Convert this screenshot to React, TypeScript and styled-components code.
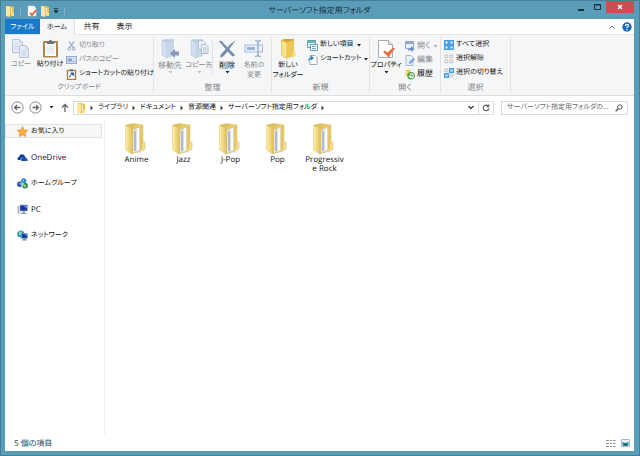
import React from "react";
import styled, { createGlobalStyle } from "styled-components";

const Global = createGlobalStyle`
  * { box-sizing: border-box; }
  body { margin: 0; }
  body, button, input {
    font-family: "Open Sans", "Noto Sans CJK JP", sans-serif;
    font-size: 8px;
    line-height: 12px;
    font-feature-settings: "palt", "kern";
    text-rendering: geometricPrecision;
    color: #111;
  }
  button { border: 0; padding: 0; background: none; white-space: nowrap; }
  svg { display: block; flex: none; }
`;

const Window = styled.div`
  min-height: 100vh;
  display: flex;
  flex-direction: column;
  background: #5b9db9;
  border: 1px solid #437f99;
  padding: 0 5px 4px 4px;
`;
const TitleBar = styled.header`
  height: 18px;
  display: grid;
  grid-template-columns: 1fr auto 1fr;
  align-items: center;
`;
const QuickAccess = styled.div`
  display: flex;
  align-items: center;
  height: 18px;
  gap: 3px;
  > i { width: 1px; height: 7px; background: #84b6cb; margin: 0 3px 0 2px; }
`;
const Title = styled.h1`
  margin: 0;
  font-size: 8px;
  line-height: 20px;
  font-weight: 400;
  color: #12303c;
`;
const Controls = styled.div`
  display: flex;
  align-self: start;
  justify-content: flex-end;
`;
const Control = styled.button<{ $close?: boolean }>`
  width: ${(p) => (p.$close ? 28 : 17)}px;
  height: 12px;
  display: grid;
  place-items: center;
  background: ${(p) => (p.$close ? "#c75050" : "transparent")};
`;
const Client = styled.main`
  flex: 1;
  display: flex;
  flex-direction: column;
  background: #fff;
`;
const Tabs = styled.nav`
  height: 16px;
  display: flex;
  border-bottom: 1px solid #e3e4e6;
`;
const Tab = styled.button<{ $kind?: "file" | "active" }>`
  width: ${(p) => (p.$kind ? 35 : 33)}px;
  height: ${(p) => (p.$kind === "active" ? 16 : 15)}px;
  font-size: ${(p) => (p.$kind ? 7 : 8)}px;
  line-height: 15px;
  padding-top: ${(p) => (p.$kind ? 1 : 0)}px;
  color: ${(p) => (p.$kind === "file" ? "#fff" : "#222")};
  background: ${(p) => (p.$kind === "file" ? "#1979ca" : p.$kind ? "#f5f6f7" : "none")};
  border-right: ${(p) => (p.$kind === "active" ? "1px solid #e0e1e3" : "0")};
`;
const TabTools = styled.div`
  margin-left: auto;
  display: flex;
  align-items: center;
  gap: 7px;
  padding-right: 2px;
`;
const Ribbon = styled.section`
  height: 61px;
  display: flex;
  background: #f5f6f7;
  border-bottom: 1px solid #dcddde;
`;
const Group = styled.section<{ $w: number }>`
  flex: 0 0 ${(p) => p.$w}px;
  min-width: 0;
  margin: 2px 0;
  border-right: 1px solid #e2e3e4;
  display: flex;
  flex-direction: column;
  justify-content: space-between;
`;
const GroupBody = styled.div`
  display: flex;
  align-items: flex-start;
`;
const GroupName = styled.h2<{ $kana?: boolean }>`
  margin: 0;
  font-size: ${(p) => (p.$kana ? 7 : 8)}px;
  line-height: 10px;
  font-weight: 400;
  text-align: center;
  color: #808183;
`;
const Big = styled.button<{ $off?: boolean; $w?: number; $kana?: boolean }>`
  flex: 0 0 ${(p) => p.$w ?? 28}px;
  min-width: 0;
  display: flex;
  flex-direction: column;
  align-items: center;
  padding-top: 2px;
  font-size: ${(p) => (p.$kana ? 7 : 8)}px;
  line-height: 10px;
  color: ${(p) => (p.$off ? "#88898c" : "#111")};
  > svg { margin-bottom: 2px; opacity: ${(p) => (p.$off ? 0.75 : 1)}; }
  > svg + span + svg { margin: 0; }
`;
const Stack = styled.div<{ $low?: boolean }>`
  display: flex;
  flex-direction: column;
  padding-top: ${(p) => (p.$low ? 2 : 1)}px;
  margin-left: 3px;
`;
const Small = styled.button<{ $off?: boolean; $kana?: boolean }>`
  height: 14px;
  display: flex;
  align-items: center;
  gap: 2px;
  font-size: ${(p) => (p.$kana ? 7 : 8)}px;
  color: ${(p) => (p.$off ? "#88898c" : "#111")};
`;
const Rule = styled.i`
  width: 1px;
  height: 34px;
  margin-top: 3px;
  background: #e0e1e2;
`;
const AddressRow = styled.div`
  height: 24px;
  display: flex;
  align-items: center;
  padding: 0 6px 1px 6px;
`;
const NavButtons = styled.div`
  display: flex;
  align-items: center;
  width: 62px;
  gap: 5px;
  > button:nth-child(3) { margin: 0 2px; }
`;
const AddressBar = styled.div`
  flex: 1;
  min-width: 0;
  height: 14px;
  display: flex;
  align-items: center;
  border: 1px solid #dadada;
  padding-left: 2px;
`;
const Crumbs = styled.div`
  flex: 1;
  display: flex;
  align-items: center;
  gap: 4px;
  padding-left: 4px;
  button { font-size: 7px; padding-top: 1px; }
`;
const BarButton = styled.button<{ $line?: boolean }>`
  width: 15px;
  height: 12px;
  display: grid;
  place-items: center;
  border-left: ${(p) => (p.$line ? "1px solid #dadada" : "0")};
`;
const Search = styled.label`
  width: 127px;
  height: 14px;
  margin-left: 7px;
  display: flex;
  align-items: center;
  border: 1px solid #dadada;
  padding: 0 4px 0 5px;
  input {
    flex: 1;
    min-width: 0;
    border: 0;
    padding: 1px 0 0;
    height: 12px;
    outline: 0;
    font-size: 7px;
    text-overflow: ellipsis;
  }
  input::placeholder { color: #666; }
`;
const Body = styled.div`
  flex: 1;
  display: flex;
`;
const Side = styled.nav`
  width: 100px;
  border-right: 1px solid #f2f2f2;
  padding: 4px 2px 0 0;
  display: flex;
  flex-direction: column;
  gap: 12px;
`;
const Place = styled.a<{ $active?: boolean; $kana?: boolean }>`
  height: 14px;
  display: flex;
  align-items: center;
  gap: 3px;
  padding-left: 11px;
  font-size: ${(p) => (p.$kana ? 7 : 8)}px;
  color: #111;
  text-decoration: none;
  background: ${(p) => (p.$active ? "#f7f7f7" : "none")};
  border: 1px solid ${(p) => (p.$active ? "#e2e2e2" : "transparent")};
  span { padding-top: 2px; }
`;
const Files = styled.section`
  flex: 1;
  display: flex;
  flex-wrap: wrap;
  align-content: flex-start;
  padding: 3px 0 0 8px;
`;
const File = styled.button`
  width: 47px;
  display: flex;
  flex-direction: column;
  align-items: center;
  line-height: 9px;
  span { width: 41px; white-space: normal; word-break: break-all; }
`;
const Status = styled.footer`
  height: 15px;
  display: flex;
  align-items: center;
  padding: 0 4px 0 9px;
  color: #24415e;
`;
const Views = styled.div`
  margin-left: auto;
  display: flex;
  gap: 5px;
`;

const FolderTiny = () => (
  <svg width="10" height="12" viewBox="0 0 10 12">
    <path d="M1 1h4l4 1v9H1z" fill="#e9c34d" />
    <path d="M1 1l4 1v10l-4-1z" fill="#fbe9a0" />
    <path d="M6 3h1v6H6z" fill="#fff5cb" />
    <path d="M7 8h2v3H7z" fill="#f8e59b" />
  </svg>
);
const DocTick = () => (
  <svg width="10" height="12" viewBox="0 0 10 12">
    <path d="M1 1h6l2 2v8H1z" fill="#fff" stroke="#c9ccd2" strokeWidth=".5" />
    <path d="M3 8l2 2 4-5" fill="none" stroke="#e8663c" strokeWidth="2" />
  </svg>
);
const Down = ({ off, wide }: { off?: boolean; wide?: boolean }) => (
  <svg width={wide ? 6 : 5} height="3" viewBox="0 0 5 3"><path d="M.5 0h4L2.500 2.600z" fill={off ? "#aaa" : "#222"} /></svg>
);
const Crumb = () => (
  <svg width="4" height="6" viewBox="0 0 4 6"><path d="M.5.5L3 3 .5 5.500z" fill="#444" /></svg>
);
const CopyIcon = () => (
  <svg width="18" height="19" viewBox="0 0 18 19" fill="#e0e9f7" stroke="#9fb5d5">
    <path d="M.5.5h7l3 3v10H.5z" />
    <path d="M7.500 .5v3h3M2.500 5h4M2.500 7.500h4M2.500 10h4" fill="none" strokeWidth=".7" />
    <path d="M7.500 6.500h6l3 3v9h-9z" />
    <path d="M13.500 6.500v3h3M9.500 12h5M9.500 14h5M9.500 16h5" fill="none" strokeWidth=".7" />
  </svg>
);
const PasteIcon = () => (
  <svg width="17" height="19" viewBox="0 0 17 19">
    <rect x="1" y="2" width="15" height="16.500" rx="1" fill="#b08550" />
    <path d="M3 4h11v13H3z" fill="#fbfcfe" />
    <path d="M4.500 8h8M4.500 10h8M4.500 12h8M4.500 14h8" stroke="#ccd5e2" strokeWidth=".7" />
    <path d="M5 5V2.500h1.500Q8.500-1 10.500 2.500H12V5z" fill="#6c747d" />
  </svg>
);
const CutIcon = () => (
  <svg width="11" height="10" viewBox="0 0 11 10" fill="none" stroke="#93a9ca">
    <path d="M3 .5l4.200 6M8 .5L3.800 6.500" strokeWidth="1.300" />
    <circle cx="3.200" cy="7.800" r="1.400" /><circle cx="7.800" cy="7.800" r="1.400" />
  </svg>
);
const PathIcon = () => (
  <svg width="11" height="8" viewBox="0 0 11 8">
    <rect x=".5" y=".5" width="10" height="7" fill="#d5e0f2" stroke="#93abd4" />
    <path d="M2 5.500l1-3 1 3 1-3 1 3M7 5.500h.8M8.600 5.500h.8" stroke="#6683b5" strokeWidth=".8" fill="none" />
  </svg>
);
const LinkPaste = () => (
  <svg width="11" height="11" viewBox="0 0 11 11">
    <rect x="1.500" y="1.500" width="8" height="9" fill="#fff" stroke="#a67a42" strokeWidth="1.300" />
    <path d="M4 .3h3v2H4z" fill="#646c75" />
    <path d="M3.700 8.600q0-3 2-3.400M4.700 3.900h2.900v2.900z" fill="#2452a6" stroke="#2452a6" strokeWidth=".8" />
  </svg>
);
const PaleFolder = ({ copy }: { copy?: boolean }) => (
  <svg width="20" height="20" viewBox="0 0 20 20">
    <path d="M2 1l3-.8h9v16H7z" fill="#a7bddb" />
    <path d="M2 1l5 2.500v16L2 16z" fill="#c8d7ec" stroke="#9fb4d2" strokeWidth=".5" />
    <path d="M7 3.500l7-2V17l-7 2z" fill="#b8cae4" />
    {copy ? (
      <g fill="#edf2fa" stroke="#859fc8" strokeWidth=".8"><path d="M9.500 1.500h4.500l2 2v7H9.500z" /><path d="M12.500 5.500h4.500l2 2v7h-6.500z" /><path d="M14 9h3.500M14 11h3.500M14 13h3.500" /></g>
    ) : (
      <path d="M10 14.500l5-4.500v2.500h4v4h-4V19z" fill="#5f7aa8" />
    )}
  </svg>
);
const DeleteIcon = () => (
  <svg width="19" height="20" viewBox="0 0 19 20">
    <path d="M1 2.500q2-1.500 3 0Q7 6 9.500 8.500 13 4 17.500 1.500 14 6 11.300 10.300L17 16q-1.500 2.500-3.500.5L9.700 12.500Q7 16 3.500 18.500 1.500 18 2.500 16 5 13 7.700 10.300 4.500 6 1 2.500z" fill="#758bae" />
  </svg>
);
const RenameIcon = () => (
  <svg width="20" height="20" viewBox="0 0 20 20" fill="none">
    <rect x="1" y="6" width="17.500" height="7" fill="#e8f0fb" stroke="#8ca7d0" />
    <path d="M3 8h8v3H3z" fill="#7f9bc9" />
    <path d="M11 1.500q3 0 3 2v12q0 2-3 2M17 1.500q-3 0-3 2M17 17.500q-3 0-3-2" stroke="#8299bd" strokeWidth="1.500" />
  </svg>
);
const NewFolder = () => (
  <svg width="18" height="20" viewBox="0 0 18 20">
    <path d="M2.500 1l3-1H15v17l-7 1z" fill="#d8a62e" />
    <path d="M2.500 1L8 3.500v16L2.500 16z" fill="#fae38c" stroke="#d9ac35" strokeWidth=".6" />
    <path d="M8 3.500L15 1v16l-7 2.500z" fill="#edc655" />
    <path d="M13.500 13l3-1v5l-3 1.500z" fill="#f8dc7d" />
  </svg>
);
const NewItem = () => (
  <svg width="11" height="11" viewBox="0 0 11 11">
    <path d="M.5.5h8v7h-8z" fill="#d9edf2" stroke="#62a2b0" />
    <path d="M1 1h7v2H1z" fill="#6bb4c2" />
    <path d="M3.500 4.500h7v6h-7z" fill="#fff" stroke="#6e9ac2" />
    <path d="M5 6.500h4M5 8.500h4" stroke="#73a7cf" />
  </svg>
);
const Shortcut = () => (
  <svg width="11" height="11" viewBox="0 0 11 11">
    <path d="M3 1.500h5l2 2v7H3z" fill="#fff" stroke="#a4a9af" />
    <path d="M1.500 8Q.5 4 4 3.500V1.500L7 4 4 6.500V5Q2 5 1.500 8z" fill="#1687ca" />
  </svg>
);
const Props = () => (
  <svg width="19" height="20" viewBox="0 0 19 20">
    <path d="M1.500 1.500h10l4 4v13h-14z" fill="#fff" stroke="#a6a9ae" />
    <path d="M11.500 1.500v4h4" fill="#e5e7eb" stroke="#a6a9ae" />
    <path d="M6 13l2-1.500 2.500 2L16 8.500l2 1Q14 14 11.500 19 9 15 6 13z" fill="#e57140" />
  </svg>
);
const OpenIcon = () => (
  <svg width="10" height="11" viewBox="0 0 10 11">
    <path d="M.5.5h8v7h-8z" fill="#e4ecf8" stroke="#93a9cc" /><path d="M1 1h7v2H1z" fill="#93a9cc" />
    <path d="M3 10q0-3 3-3V5l3.500 3.200L6 11V9Q4 9 3 10z" fill="#6f8dbe" />
  </svg>
);
const EditIcon = () => (
  <svg width="10" height="11" viewBox="0 0 10 11">
    <path d="M1 .5h5l2 2v8H1z" fill="#e8f0fa" stroke="#a5b8d4" /><path d="M4 9l.5-2.500L8.500 3 10 4.500 6 8.500z" fill="#83a4d2" />
  </svg>
);
const HistoryIcon = () => (
  <svg width="10" height="11" viewBox="0 0 11 11">
    <path d="M0 1l2-.8h4v7L3 9 0 7z" fill="#e9c957" /><path d="M0 1l3 1.500V9L0 7z" fill="#fbe694" />
    <circle cx="6.800" cy="6.800" r="3.500" fill="#f5fff2" stroke="#3f9f3c" strokeWidth="1.300" />
    <path d="M2 5l3-1v3.500z" fill="#238b2a" /><path d="M6.800 4.500V7h2" fill="none" stroke="#444" strokeWidth=".8" />
  </svg>
);
const SelectIcon = ({ on }: { on: number[] }) => (
  <svg width="10" height="10" viewBox="0 0 10 10">
    {[0, 1, 2, 3].map((i) => {
      const x = (i % 2) * 5, y = Math.floor(i / 2) * 5;
      return on.includes(i) ? (
        <g key={i}><path d={`M${x} ${y}h5v5h-5z`} fill="#4b9fe0" /><path d={`M${x + 1.5} ${y + 1.5}h2v2h-2z`} fill="#e8f5ff" /></g>
      ) : (
        <rect key={i} x={x + 1} y={y + 1} width="2.800" height="2.800" rx=".5" fill="#fff" stroke="#a5a8ab" strokeWidth=".8" />
      );
    })}
  </svg>
);
const Arrow = ({ right }: { right?: boolean }) => (
  <svg width="13" height="13" viewBox="0 0 13 13" fill="none" stroke="#686868">
    <circle cx="6.500" cy="6.500" r="5.600" stroke="#858585" />
    <path d={right ? "M3.500 6.500h6M7 4l2.500 2.500L7 9" : "M9.500 6.500h-6M6 4L3.500 6.500 6 9"} strokeWidth="1.300" />
  </svg>
);
const Star = () => (
  <svg width="11" height="11" viewBox="0 0 11 11"><path d="M5.500.5l1.500 3.400 3.700.4L8 6.900l.8 3.700-3.300-1.900-3.300 1.900L3 6.900.3 4.300 4 3.900z" fill="#ffb13b" stroke="#df7623" strokeWidth=".6" /></svg>
);
const Cloud = () => (
  <svg width="11" height="11" viewBox="0 0 11 11"><path d="M1 8Q-.5 5.500 2 5 3 1.500 6 2.500q2 .7 2 2L4 6 3.300 8z" fill="#0b3b8c" /><path d="M4.500 9Q3 7 5 6q1-2 3-1.300Q9.500 5.200 9.500 6.500q2 1 .8 2.500z" fill="#174fae" /></svg>
);
const HomeGroup = () => (
  <svg width="11" height="11" viewBox="0 0 11 11">
    <circle cx="6.700" cy="2.800" r="2.600" fill="#2f86c9" /><circle cx="2.800" cy="6.200" r="2.700" fill="#2450b5" /><circle cx="8" cy="7.600" r="2.900" fill="#2f8c41" />
    <path d="M3 5l3-1 2 3-3 2z" fill="#8fd1b7" /><path d="M2 5.500l1 1M7 8h2M6 2l1 1" stroke="#e8fbff" />
  </svg>
);
const PcIcon = () => (
  <svg width="11" height="11" viewBox="0 0 11 11">
    <path d="M.7 2h1.600v8H.7z" fill="#adb3b9" /><rect x="3" y="1" width="7.500" height="6" fill="#1737a9" stroke="#a4b0c4" strokeWidth=".7" />
    <path d="M6 1.500h4v3z" fill="#7196e6" /><path d="M5.500 7.500h2.500v1.500h1.500v1h-6V9h2z" fill="#939ca7" />
  </svg>
);
const NetIcon = () => (
  <svg width="11" height="11" viewBox="0 0 11 11">
    <circle cx="3.800" cy="4" r="3.600" fill="#2798c4" /><path d="M2 1.500l3 0-1 3-2 1z" fill="#86d8a7" />
    <rect x="4.500" y="3.500" width="6" height="5" fill="#1738ab" stroke="#9fb1cb" strokeWidth=".6" /><path d="M6 9h3l1 1.500H5z" fill="#7f8b98" /><path d="M7.500 4H10v2z" fill="#6a92e6" />
  </svg>
);
const Folder = () => (
  <svg width="26" height="32" viewBox="0 0 26 32">
    <defs>
      <linearGradient id="flap"><stop stopColor="#fff0ae" /><stop offset="1" stopColor="#e3c25c" /></linearGradient>
      <linearGradient id="back"><stop stopColor="#d8b450" /><stop offset="1" stopColor="#f0d57c" /></linearGradient>
      <linearGradient id="shade"><stop stopColor="#b8b8b8" /><stop offset="1" stopColor="#fff" stopOpacity="0" /></linearGradient>
    </defs>
    <path d="M17 18l9 7-8 5H8z" fill="url(#shade)" opacity=".7" />
    <path d="M2 2l7-1.500L19 2v25L8 31z" fill="url(#back)" stroke="#d9ba61" strokeWidth=".5" />
    <path d="M9 7l5-2v23l-5 2z" fill="#dfe3e8" />
    <path d="M11 8v20" stroke="#8794a6" />
    <path d="M12.500 5.500l3-1v23l-3 1z" fill="#f8fafb" stroke="#c6c9ca" strokeWidth=".4" />
    <path d="M16 3l3-1v25l-3 1z" fill="#e6c765" />
    <path d="M1.500 2.500L8 5v26l-6.500-4z" fill="url(#flap)" stroke="#dfc36e" strokeWidth=".5" />
    <path d="M18 20l3-1v7L16 28.500V26l2-1z" fill="#f6df94" stroke="#d5b75f" strokeWidth=".5" />
  </svg>
);

const places = [
  { name: "お気に入り", Icon: Star, kana: true },
  { name: "OneDrive", Icon: Cloud, kana: false },
  { name: "ホームグループ", Icon: HomeGroup, kana: true },
  { name: "PC", Icon: PcIcon, kana: false },
  { name: "ネットワーク", Icon: NetIcon, kana: true },
];
const crumbs = ["ライブラリ", "ドキュメント", "音源関連", "サーバーソフト指定用フォルダ"];
const folders = ["Anime", "Jazz", "J-Pop", "Pop", "Progressive Rock"];

export default function App() {
  return (
    <>
      <Global />
      <Window>
        <TitleBar>
          <QuickAccess><FolderTiny /><i /><DocTick /><FolderTiny />
            <svg width="6" height="6" viewBox="0 0 6 6"><path d="M1 .5h4M1 2.500h4L3 5z" fill="#17303b" stroke="#17303b" strokeWidth=".8" /></svg><i />
          </QuickAccess>
          <Title>サーバーソフト指定用フォルダ</Title>
          <Controls>
            <Control aria-label="最小化"><svg width="6" height="8"><path d="M0 6h6v2H0z" fill="#18323e" /></svg></Control>
            <Control aria-label="最大化"><svg width="7" height="6"><path d="M.5.5h6v5h-6zM0 1h7" fill="none" stroke="#18323e" /></svg></Control>
            <Control $close aria-label="閉じる"><svg width="6" height="6"><path d="M1 1l4 4M5 1L1 5" stroke="#fff" strokeWidth="1.400" /></svg></Control>
          </Controls>
        </TitleBar>
        <Client>
          <Tabs>
            <Tab $kind="file">ファイル</Tab><Tab $kind="active">ホーム</Tab><Tab>共有</Tab><Tab>表示</Tab>
            <TabTools>
              <svg width="6" height="4"><path d="M.5 3.500L3 1l2.500 2.500" fill="none" stroke="#666" /></svg>
              <svg width="10" height="10" viewBox="0 0 10 10"><circle cx="5" cy="5" r="4.700" fill="#1769c5" /><path d="M3.500 4Q3.500 2.300 5 2.300T6.500 3.800Q6.500 4.600 5 5.300V6M5 7v1.200" fill="none" stroke="#fff" strokeWidth="1.200" /></svg>
            </TabTools>
          </Tabs>
          <Ribbon>
            <Group $w={149}>
              <GroupBody>
                <Big $off $kana $w={32}><CopyIcon /><span>コピー</span></Big>
                <Big $kana $w={26}><PasteIcon /><span>貼り付け</span></Big>
                <Stack $low>
                  <Small $off $kana><CutIcon /><span>切り取り</span></Small>
                  <Small $off $kana><PathIcon /><span>パスのコピー</span></Small>
                  <Small $kana><LinkPaste /><span>ショートカットの貼り付け</span></Small>
                </Stack>
              </GroupBody>
              <GroupName $kana>クリップボード</GroupName>
            </Group>
            <Group $w={118}>
              <GroupBody>
                <Big $off $w={32}><PaleFolder /><span>移動先</span><Down off /></Big>
                <Big $off $kana $w={26}><PaleFolder copy /><span>コピー先</span><Down off /></Big>
                <Rule />
                <Big><DeleteIcon /><span>削除</span><Down /></Big>
                <Big $off $kana $w={26}><RenameIcon /><span>名前の<br />変更</span></Big>
              </GroupBody>
              <GroupName>整理</GroupName>
            </Group>
            <Group $w={98}>
              <GroupBody>
                <Big $kana $w={32}><NewFolder /><span>新しい<br />フォルダー</span></Big>
                <Stack>
                  <Small $kana><NewItem /><span>新しい項目</span><Down wide /></Small>
                  <Small $kana><Shortcut /><span>ショートカット</span><Down wide /></Small>
                </Stack>
              </GroupBody>
              <GroupName>新規</GroupName>
            </Group>
            <Group $w={71}>
              <GroupBody>
                <Big $kana $w={32}><Props /><span>プロパティ</span><Down /></Big>
                <Stack $low>
                  <Small $off><OpenIcon /><span>開く</span><Down off /></Small>
                  <Small $off><EditIcon /><span>編集</span></Small>
                  <Small><HistoryIcon /><span>履歴</span></Small>
                </Stack>
              </GroupBody>
              <GroupName>開く</GroupName>
            </Group>
            <Group $w={70}>
              <GroupBody>
                <Stack>
                  <Small $kana><SelectIcon on={[0, 1, 2, 3]} /><span>すべて選択</span></Small>
                  <Small $kana><SelectIcon on={[]} /><span>選択解除</span></Small>
                  <Small $kana><SelectIcon on={[1, 2]} /><span>選択の切り替え</span></Small>
                </Stack>
              </GroupBody>
              <GroupName>選択</GroupName>
            </Group>
          </Ribbon>
          <AddressRow>
            <NavButtons>
              <button aria-label="戻る"><Arrow /></button>
              <button aria-label="進む"><Arrow right /></button>
              <button aria-label="履歴"><Down /></button>
              <button aria-label="上へ"><svg width="8" height="9"><path d="M4 9V1.500M1 4.500l3-3 3 3" fill="none" stroke="#666" strokeWidth="1.300" /></svg></button>
            </NavButtons>
            <AddressBar>
              <FolderTiny />
              <Crumbs><Crumb />{crumbs.map((c) => <React.Fragment key={c}><button>{c}</button><Crumb /></React.Fragment>)}</Crumbs>
              <BarButton aria-label="履歴を表示"><svg width="6" height="5"><path d="M.5 1L3 3.500 5.500 1" fill="none" stroke="#444" strokeWidth="1.400" /></svg></BarButton>
              <BarButton $line aria-label="更新"><svg width="8" height="8"><path d="M6.300 2.200A2.800 2.800 0 1 0 6.800 4.500M6.700 .5v2.200H4.500" fill="none" stroke="#666" strokeWidth="1.200" /></svg></BarButton>
            </AddressBar>
            <Search>
              <input aria-label="検索" placeholder="サーバーソフト指定用フォルダの..." />
              <svg width="8" height="8"><circle cx="4.800" cy="3" r="2.200" fill="none" stroke="#555" /><path d="M3.200 4.700L.7 7.300" stroke="#555" strokeWidth="1.400" /></svg>
            </Search>
          </AddressRow>
          <Body>
            <Side>{places.map(({ name, Icon, kana }, i) => <Place key={name} href="#" $kana={kana} $active={i === 0}><Icon /><span>{name}</span></Place>)}</Side>
            <Files>{folders.map((f) => <File key={f}><Folder /><span>{f}</span></File>)}</Files>
          </Body>
          <Status>5 個の項目
            <Views>
              <button aria-label="詳細"><svg width="10" height="9"><path d="M0 1.500h3M0 4.500h3M0 7.500h3M4 1.500h2M7 1.500h2.500M4 4.500h2M7 4.500h2.500M4 7.500h2M7 7.500h2.500" stroke="#8b9091" /></svg></button>
              <button aria-label="大アイコン"><svg width="9" height="9"><path d="M.5.5h8v7h-8z" fill="#e6f5fa" stroke="#a4bcc9" /><path d="M1.500 3l3 1 3-1v3.500h-6z" fill="#2a8cb0" /><path d="M2 6l3-1.500L7 6.500H2z" fill="#1b4a51" /></svg></button>
            </Views>
          </Status>
        </Client>
      </Window>
    </>
  );
}
